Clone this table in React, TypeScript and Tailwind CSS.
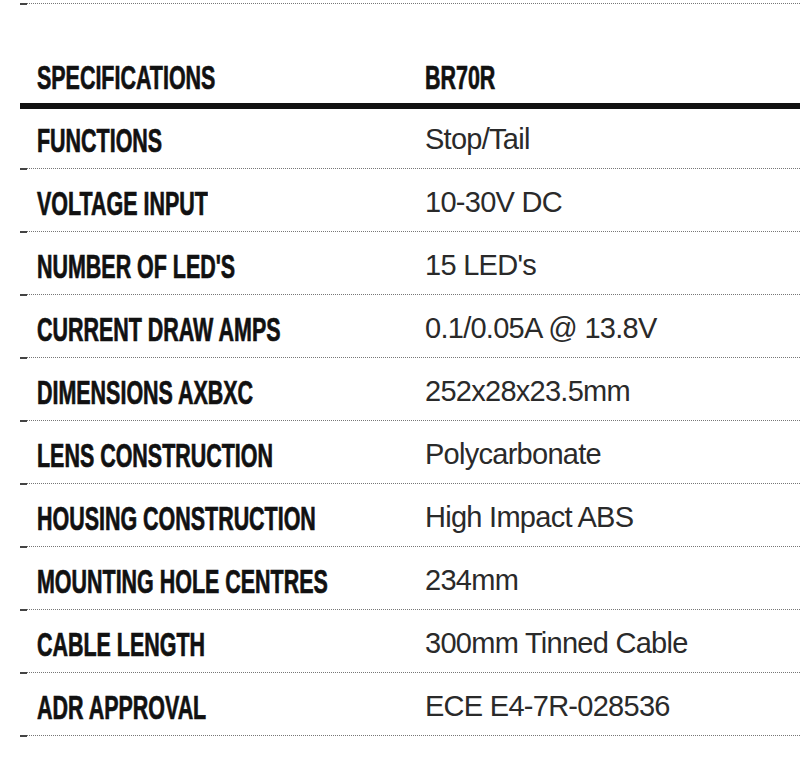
const specs: [string, string][] = [
  ["FUNCTIONS", "Stop/Tail"],
  ["VOLTAGE INPUT", "10-30V DC"],
  ["NUMBER OF LED'S", "15 LED's"],
  ["CURRENT DRAW AMPS", "0.1/0.05A @ 13.8V"],
  ["DIMENSIONS AXBXC", "252x28x23.5mm"],
  ["LENS CONSTRUCTION", "Polycarbonate"],
  ["HOUSING CONSTRUCTION", "High Impact ABS"],
  ["MOUNTING HOLE CENTRES", "234mm"],
  ["CABLE LENGTH", "300mm Tinned Cable"],
  ["ADR APPROVAL", "ECE E4-7R-028536"],
];

function DottedLine() {
  return (
    <div className="flex h-px items-center">
      <div className="h-[2px] w-[7px] shrink-0 bg-[#444]" />
      <div className="flex-1 border-t border-dotted border-[#777]" />
    </div>
  );
}

function Label({ children }: { children: string }) {
  return (
    <span className="inline-block origin-left scale-x-[0.65] whitespace-nowrap font-['Liberation_Sans',Arial,sans-serif] text-[33px] font-bold leading-none text-[#111] [-webkit-text-stroke:0.7px_#111]">
      {children}
    </span>
  );
}

function Value({ children }: { children: string }) {
  return (
    <span className="whitespace-nowrap font-['Liberation_Sans',Arial,sans-serif] text-[29px] leading-none tracking-[-0.025em] text-[#2a2a2a]">
      {children}
    </span>
  );
}

export default function App() {
  return (
    <div className="h-[765px] w-[800px] overflow-hidden bg-white pl-5 pt-[3px]">
      <DottedLine />

      {/* Header */}
      <div className="flex h-[99px] items-end pb-[8px]">
        <div className="w-[405px] shrink-0 pl-[17px]">
          <Label>SPECIFICATIONS</Label>
        </div>
        <div>
          <Label>BR70R</Label>
        </div>
      </div>
      <div className="h-[6px] bg-[#111]" />

      {/* Rows */}
      {specs.map(([label, value], i) => (
        <div key={label}>
          <div className={`flex items-end ${i === 0 ? "h-[59px]" : "h-[62px]"}`}>
            <div className="w-[405px] shrink-0 pb-[10px] pl-[17px]">
              <Label>{label}</Label>
            </div>
            <div className="pb-[13px]">
              <Value>{value}</Value>
            </div>
          </div>
          <DottedLine />
        </div>
      ))}
    </div>
  );
}
